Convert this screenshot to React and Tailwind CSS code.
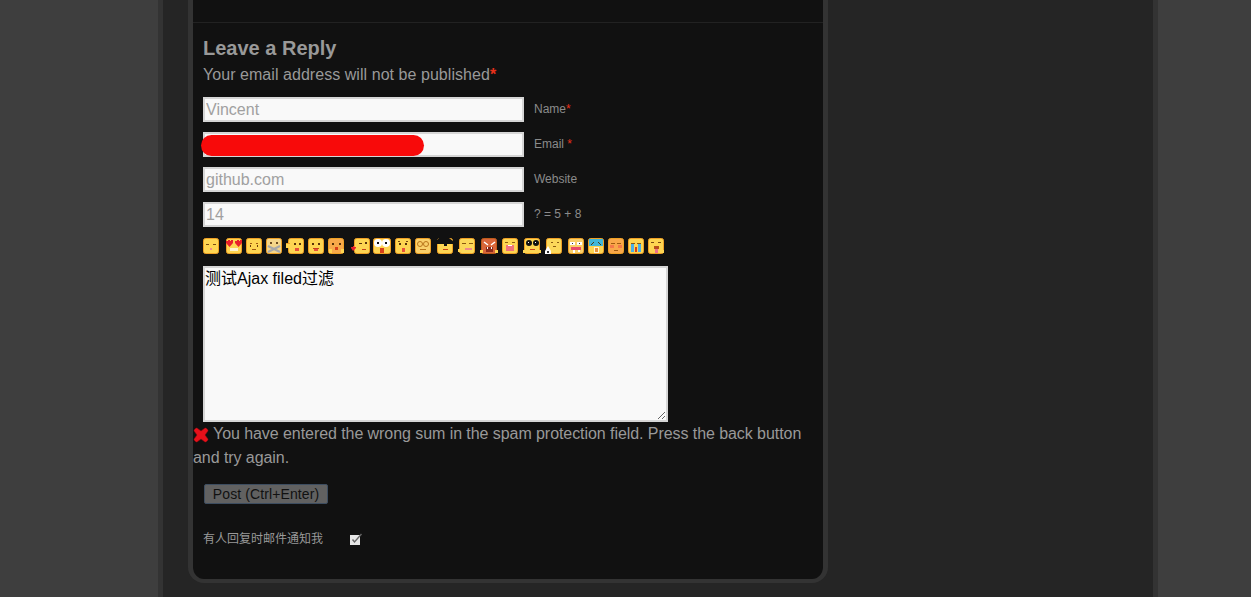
const SANS = "font-['Liberation_Sans','Noto_Sans_CJK_SC',sans-serif]"

// tiny pixel-art helper for the smileys
const R = ({ x, y, w = 1, h = 1, c }) => <rect x={x} y={y} width={w} height={h} fill={c} />

const Face = ({ x = 0, w = 16, fill = "#fed552", edge = "#f0a024", children }) => (
  <>
    <rect x={x + 0.5} y="1.5" width={w - 1} height="15" rx="2" fill={fill} stroke={edge} />
    {children}
  </>
)

const smileys = [
  { adv: 23, art: <Face><R x={3} y={7} w={3} c="#7a4a10" /><R x={10} y={7} w={3} c="#7a4a10" /><R x={7} y={11} w={2} h={2} c="#f08a8a" /></Face> },
  { adv: 20, art: <Face><path d="M0 4h2v-1h2v1h1v-1h2v3l-3.500 4-3.500-4zM9 4h2v-1h2v1h1v-1h2v3l-3.500 4-3.500-4z" fill="#e8202a" /><R x={4} y={11} w={8} h={3} c="#fff4d0" /></Face> },
  { adv: 20, art: <Face><R x={4} y={6} w={2} c="#a05a10" /><R x={10} y={6} w={2} c="#a05a10" /><R x={4} y={8} h={2} c="#6a3a08" /><R x={11} y={8} h={2} c="#6a3a08" /><R x={6} y={12} w={4} c="#a05a10" /></Face> },
  { adv: 20, art: <Face fill="#f5d68a"><R x={4} y={5} w={2} h={2} c="#6a4a20" /><R x={10} y={5} w={2} h={2} c="#6a4a20" /><path d="M2 9l12 6M14 9L2 15" stroke="#a8a8a8" strokeWidth="2.200" /></Face> },
  { adv: 22, art: <Face x={2}><R x={0} y={7} w={5} h={4} c="#fed552" /><R x={0} y={6} w={4} c="#f0a024" /><R x={8} y={6} w={2} h={2} c="#5a3208" /><R x={13} y={6} w={2} h={2} c="#5a3208" /><R x={9} y={11} w={4} h={3} c="#e8503a" /></Face> },
  { adv: 20, art: <Face><R x={4} y={6} w={2} h={2} c="#5a3208" /><R x={10} y={6} w={2} h={2} c="#5a3208" /><R x={5} y={11} w={6} c="#c8401a" /><R x={6} y={12} w={4} h={2} c="#e8503a" /></Face> },
  { adv: 23, art: <Face fill="#f7a94a"><R x={4} y={6} w={2} h={2} c="#5a3208" /><R x={11} y={6} w={2} h={2} c="#5a3208" /><R x={7} y={10} w={3} h={3} c="#d8401a" /><R x={1} y={12} w={3} h={4} c="#fed552" /><R x={13} y={12} w={3} h={4} c="#fed552" /></Face> },
  { adv: 22, art: <Face x={3}><path d="M0 10h2v-1h1v1h2v1l-3 3-2-3z" fill="#e8202a" /><R x={8} y={6} w={3} c="#5a3208" /><R x={14} y={5} w={2} h={2} c="#5a3208" /><R x={11} y={12} w={4} c="#c8401a" /></Face> },
  { adv: 22, art: <Face w={18}><circle cx="5" cy="6" r="4" fill="#fff" /><circle cx="13" cy="6" r="4" fill="#fff" /><R x={4} y={5} w={2} h={2} c="#111" /><R x={12} y={5} w={2} h={2} c="#111" /><R x={7} y={11} w={4} h={5} c="#d8401a" /></Face> },
  { adv: 20, art: <Face><R x={3} y={4} w={2} c="#7a4a10" /><R x={11} y={4} w={2} c="#7a4a10" /><R x={4} y={6} w={2} h={2} c="#5a3208" /><R x={10} y={6} w={2} h={2} c="#5a3208" /><R x={7} y={11} w={3} h={4} c="#e8503a" /></Face> },
  { adv: 22, art: <Face fill="#f9cf6a"><circle cx="5" cy="7" r="2.500" fill="none" stroke="#b8741a" /><circle cx="11" cy="7" r="2.500" fill="none" stroke="#b8741a" /><R x={5} y={12} w={6} c="#b8741a" /></Face> },
  { adv: 21, art: <Face><path d="M0 3l2-2h10l4 3v3h-6v2h-3v-2h-7z" fill="#111" /><R x={6} y={12} w={5} c="#c8401a" /></Face> },
  { adv: 22, art: <Face x={1} fill="#fbd85a"><R x={4} y={6} w={4} c="#8a5a10" /><R x={11} y={6} w={4} c="#8a5a10" /><R x={7} y={11} w={7} h={2} c="#f08a8a" /><R x={0} y={12} w={4} h={3} c="#fed552" /></Face> },
  { adv: 22, art: <Face x={1} fill="#d8663a" edge="#c05a1a"><path d="M4 5l4 3M15 5l-4 3" stroke="#fff" strokeWidth="1.500" /><R x={6} y={10} w={7} h={5} c="#8a2a1a" /><R x={7} y={10} w={1} h={2} c="#fff" /><R x={11} y={10} w={1} h={2} c="#fff" /><R x={0} y={13} w={3} h={3} c="#fed552" /><R x={15} y={13} w={3} h={3} c="#fed552" /></Face> },
  { adv: 21, art: <Face><R x={3} y={5} w={3} c="#8a5a10" /><R x={10} y={5} w={3} c="#8a5a10" /><R x={4} y={8} w={8} h={6} c="#f0707a" /><R x={6} y={8} w={4} c="#fff" /></Face> },
  { adv: 22, art: <Face x={1}><circle cx="6" cy="6" r="3" fill="#111" /><circle cx="13" cy="6" r="3" fill="#111" /><R x={5} y={5} c="#fff" /><R x={12} y={5} c="#fff" /><R x={7} y={12} w={5} c="#c8401a" /><R x={0} y={13} w={3} h={3} c="#fed552" /><R x={15} y={13} w={3} h={3} c="#fed552" /></Face> },
  { adv: 23, art: <Face x={1} fill="#fbd85a"><R x={6} y={5} w={2} c="#8a5a10" /><R x={12} y={5} w={2} c="#8a5a10" /><R x={8} y={9} w={3} c="#8a5a10" /><path d="M0 14l3-5 3 5v3h-6z" fill="#fff" /><R x={2} y={14} w={2} h={2} c="#333" /></Face> },
  { adv: 20, art: <Face fill="#f9cf6a"><R x={2} y={5} w={5} h={3} c="#fff" /><R x={9} y={5} w={5} h={3} c="#fff" /><R x={4} y={6} c="#333" /><R x={11} y={6} c="#333" /><R x={3} y={10} w={10} h={3} c="#e84a6a" /><R x={5} y={13} w={2} h={3} c="#fff" /><R x={10} y={13} w={2} h={2} c="#fff" /></Face> },
  { adv: 20, art: <Face><R x={1} y={2} w={14} h={7} c="#3fb6d8" /><path d="M3 8l3-3M13 8l-3-3" stroke="#4a3a10" /><R x={6} y={10} w={5} h={6} c="#fff4d0" /><R x={7} y={11} w={3} h={4} c="#e8903a" /></Face> },
  { adv: 20, art: <Face fill="#f9a84a"><R x={3} y={6} w={4} c="#a05a10" /><R x={9} y={6} w={4} c="#a05a10" /><R x={2} y={8} w={4} h={3} c="#f47a4a" /><R x={10} y={8} w={4} h={3} c="#f47a4a" /><R x={6} y={13} w={4} c="#a05a10" /></Face> },
  { adv: 20, art: <Face><R x={3} y={6} w={4} c="#8a5a10" /><R x={9} y={6} w={4} c="#8a5a10" /><R x={3} y={7} w={3} h={8} c="#4ab0e8" /><R x={10} y={7} w={3} h={8} c="#4ab0e8" /><R x={7} y={10} w={2} h={5} c="#d8401a" /></Face> },
  { adv: 17, art: <Face><R x={3} y={5} w={3} c="#7a4a10" /><R x={10} y={5} w={3} c="#7a4a10" /><R x={6} y={9} w={5} h={3} c="#b8501a" /><R x={7} y={12} w={3} h={4} c="#f0708a" /><R x={13} y={13} w={3} h={3} c="#fed552" /></Face> },
]

const fields = [
  { value: "Vincent", label: <>Name<span className="text-[#e8301a]">*</span></> },
  { value: "", label: <>Email <span className="text-[#e8301a]">*</span></>, hidden: true },
  { value: "github.com", label: "Website" },
  { value: "14", label: "? = 5 + 8" },
]

function Field({ value, label, hidden }) {
  return (
    <div className="relative flex h-[25px] items-center">
      <input
        readOnly
        value={value}
        className="h-[25px] w-[321px] border-2 border-[#d6d6d6] bg-[#f9f9f9] px-[1px] text-base text-[#a0a0a0] outline-none"
      />
      <label className="mb-[2px] ml-[10px] text-xs text-[#8b8b8b]">{label}</label>
      {hidden && <div className="absolute left-[-2px] top-[3px] h-[21px] w-[223px] rounded-full bg-[#f80a0a]" />}
    </div>
  )
}

export default function App() {
  return (
    <div className={`h-[597px] w-full overflow-hidden bg-[#3e3e3e] ${SANS}`}>
      <div className="ml-[158px] h-full w-[1000px] border-x-[5px] border-[#333333] bg-[#252525] pl-[25px]">
        <div className="h-[583px] w-[640px] rounded-b-[16px] border-x-[5px] border-b-4 border-[#333333] bg-[#111111]">
          <div className="h-[23px] border-b border-[#222222]" />

          <div className="px-[10px]">
            <h3 className="mt-[12px] text-xl leading-[26px] font-bold text-[#999999]">Leave a Reply</h3>
            <p className="mt-[1px] text-base leading-[26px] tracking-[0.05px] text-[#999999]">
              Your email address will not be published<span className="font-bold text-[#e8301a]">*</span>
            </p>

            <div className="mt-[9px] flex flex-col gap-[10px]">
              {fields.map((f) => (
                <Field key={f.value + "x"} {...f} />
              ))}
            </div>

            <div className="mt-[10px] flex h-[18px]">
              {smileys.map((s, i) => (
                <svg key={i} width={s.adv} height="18" viewBox={`0 0 ${s.adv} 18`} className="shrink-0">
                  {s.art}
                </svg>
              ))}
            </div>

            <textarea
              readOnly
              value="测试Ajax filed过滤"
              className="mt-[11px] block h-[156px] w-[465px] border-2 border-[#d6d6d6] bg-[#f9f9f9] pt-[1px] text-base leading-[19px] text-black outline-none"
            />
          </div>

          <p className="text-base leading-6 tracking-[-0.065px] text-[#999999]">
            <svg width="16" height="16" viewBox="0 0 16 16" className="mr-[4px] inline-block align-[-4px]">
              <path d="M1 3l2-2h1l4 3 4-3h1l2 2v1l-3 4 3 4v1l-2 2h-1l-4-3-4 3h-1l-2-2v-1l3-4-3-4z" fill="#e8101a" stroke="#8a0a10" strokeWidth="0.500" />
            </svg>
            You have entered the wrong sum in the spam protection field. Press the back button and try again.
          </p>

          <div className="mt-[14px] pl-[11px]">
            <button className="block h-[20px] w-[124px] rounded-[2px] border border-[#3d4d60] bg-[#616161] text-sm leading-[18px] tracking-[0.1px] text-[#111111]">
              Post (Ctrl+Enter)
            </button>
          </div>

          <div className="mt-[26px] flex items-center pl-[10px]">
            <span className="w-[147px] text-xs leading-[18px] text-[#999999]">有人回复时邮件通知我</span>
            <svg width="12" height="12" viewBox="0 0 12 12">
              <rect x="0" y="2" width="10" height="10" fill="#e6e6e6" />
              <path d="M2.500 6.500l2 2.500 7-8" fill="none" stroke="#666666" strokeWidth="1.400" />
            </svg>
          </div>
        </div>
      </div>
    </div>
  )
}
